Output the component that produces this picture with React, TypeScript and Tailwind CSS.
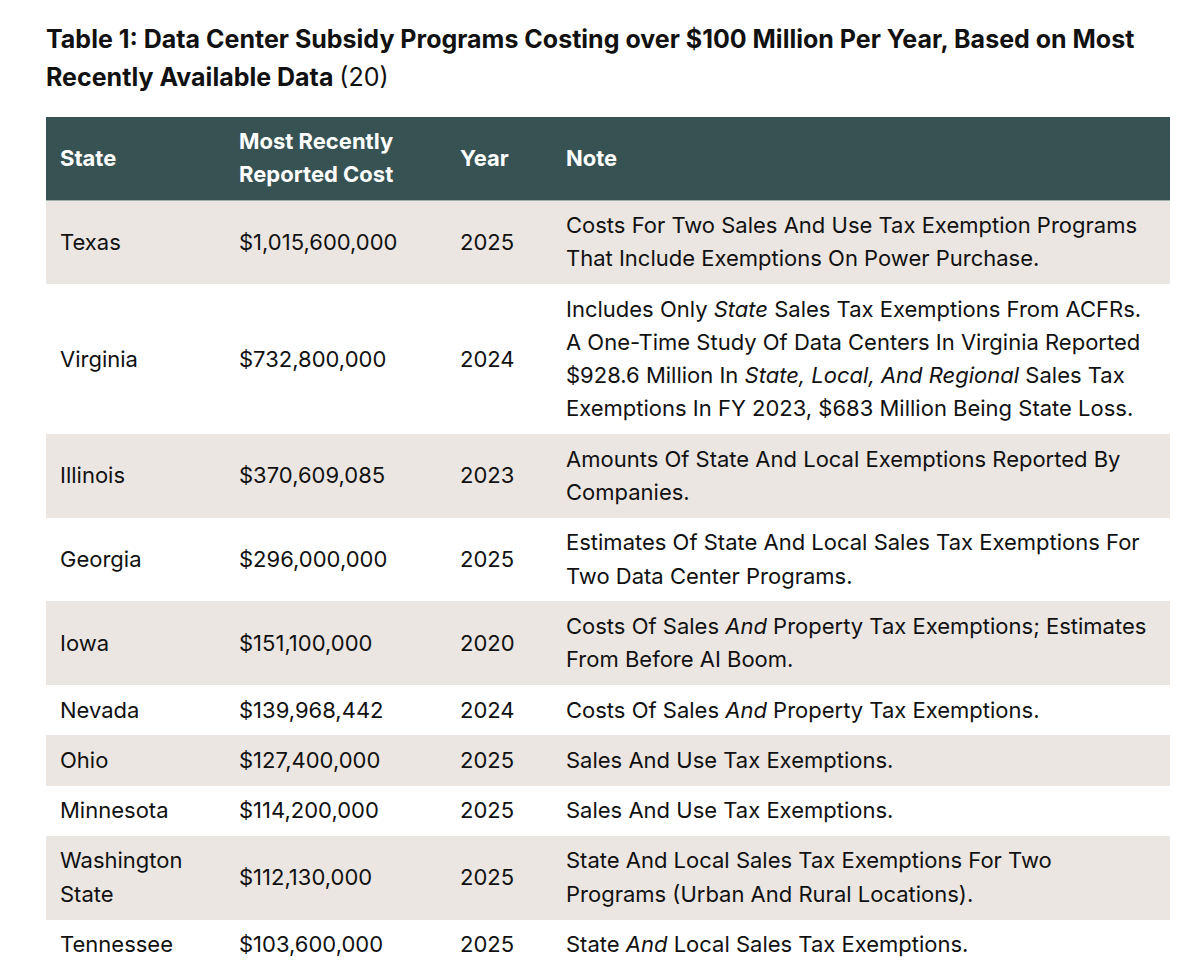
import React from 'react'

type Row = {
  state: React.ReactNode
  cost: string
  year: string
  note: React.ReactNode
}

const ROWS: Row[] = [
  {
    state: 'Texas',
    cost: '$1,015,600,000',
    year: '2025',
    note: 'Costs For Two Sales And Use Tax Exemption Programs That Include Exemptions On Power Purchase.',
  },
  {
    state: 'Virginia',
    cost: '$732,800,000',
    year: '2024',
    note: (
      <>
        Includes Only <em>State</em> Sales Tax Exemptions From ACFRs. A One-Time Study Of Data Centers In
        Virginia Reported $928.6 Million In <em>State, Local, And Regional</em> Sales Tax Exemptions In FY
        2023, $683 Million Being State Loss.
      </>
    ),
  },
  {
    state: 'Illinois',
    cost: '$370,609,085',
    year: '2023',
    note: 'Amounts Of State And Local Exemptions Reported By Companies.',
  },
  {
    state: 'Georgia',
    cost: '$296,000,000',
    year: '2025',
    note: 'Estimates Of State And Local Sales Tax Exemptions For Two Data Center Programs.',
  },
  {
    state: 'Iowa',
    cost: '$151,100,000',
    year: '2020',
    note: (
      <>
        Costs Of Sales <em>And</em> Property Tax Exemptions; Estimates From Before AI Boom.
      </>
    ),
  },
  {
    state: 'Nevada',
    cost: '$139,968,442',
    year: '2024',
    note: (
      <>
        Costs Of Sales <em>And</em> Property Tax Exemptions.
      </>
    ),
  },
  { state: 'Ohio', cost: '$127,400,000', year: '2025', note: 'Sales And Use Tax Exemptions.' },
  { state: 'Minnesota', cost: '$114,200,000', year: '2025', note: 'Sales And Use Tax Exemptions.' },
  {
    state: (
      <>
        Washington
        <br />
        State
      </>
    ),
    cost: '$112,130,000',
    year: '2025',
    note: 'State And Local Sales Tax Exemptions For Two Programs (Urban And Rural Locations).',
  },
  {
    state: 'Tennessee',
    cost: '$103,600,000',
    year: '2025',
    note: (
      <>
        State <em>And</em> Local Sales Tax Exemptions.
      </>
    ),
  },
]

export default function App() {
  return (
    <div className="min-h-screen bg-white font-['Inter',sans-serif] text-[#111111]">
      <div className="px-[46px] pt-[20px]">
        <h1 className="text-[25px] leading-[38px] font-bold">
          Table 1: Data Center Subsidy Programs Costing over $100 Million Per Year, Based on Most Recently
          Available Data <span className="font-normal">(20)</span>
        </h1>

        <table className="mt-[21px] w-[1124px] border-collapse text-[22px] leading-[33.3px]">
          <colgroup>
            <col className="w-[179px]" />
            <col className="w-[221px]" />
            <col className="w-[106px]" />
            <col className="w-[618px]" />
          </colgroup>
          <thead>
            <tr className="bg-[#375253] text-white border-b border-[#9db0aa]">
              <th className="h-[83px] px-[14px] text-left align-middle font-bold">State</th>
              <th className="px-[14px] text-left align-middle font-bold">
                Most Recently
                <br />
                Reported Cost
              </th>
              <th className="px-[14px] text-left align-middle font-bold">Year</th>
              <th className="px-[14px] text-left align-middle font-bold">Note</th>
            </tr>
          </thead>
          <tbody>
            {ROWS.map((row, i) => (
              <tr key={i} className={i % 2 === 0 ? 'bg-[#ebe6e2]' : 'bg-white'}>
                <td className="px-[14px] py-[8.5px] align-middle">{row.state}</td>
                <td className="px-[14px] py-[8.5px] align-middle">{row.cost}</td>
                <td className="px-[14px] py-[8.5px] align-middle">{row.year}</td>
                <td className="px-[14px] py-[8.5px] align-middle">{row.note}</td>
              </tr>
            ))}
          </tbody>
        </table>
      </div>
    </div>
  )
}
